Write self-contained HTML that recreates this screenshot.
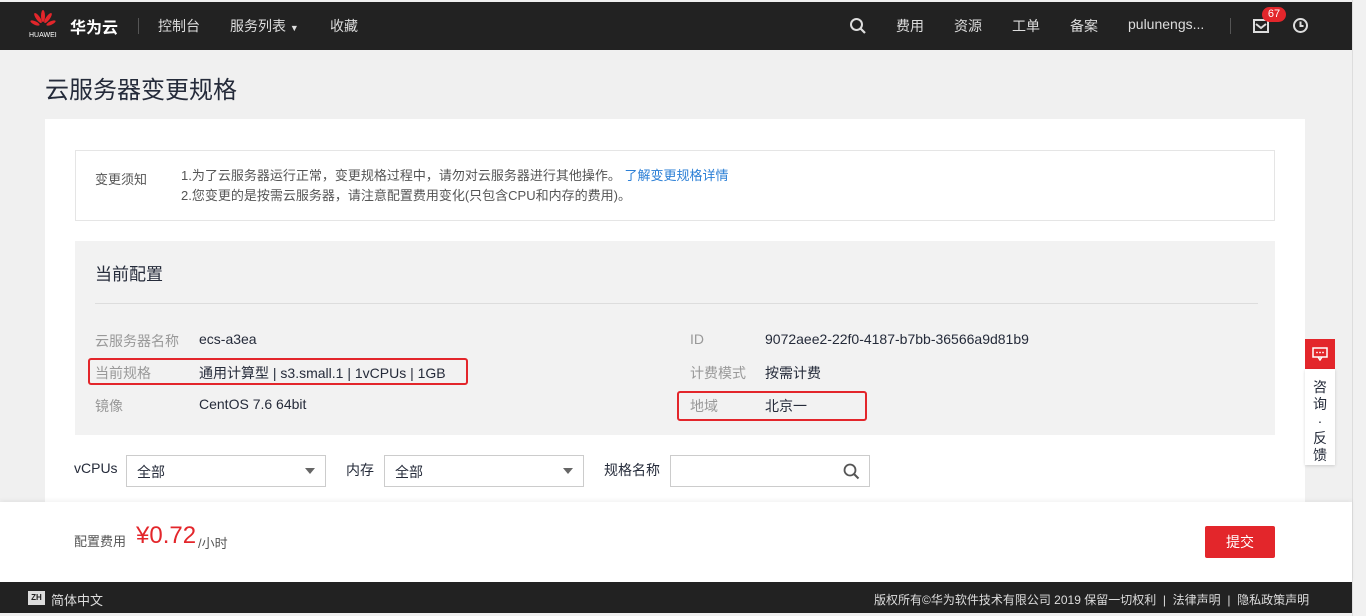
<!DOCTYPE html>
<html><head><meta charset="utf-8"><style>
*{margin:0;padding:0;box-sizing:border-box}
body{width:1366px;height:616px;overflow:hidden;background:#f0f0f0;font-family:"Liberation Sans","Noto Sans CJK SC",sans-serif;font-size:13px;color:#252b3a;position:relative}
.abs{position:absolute}
.top{left:0;top:2px;width:1352px;height:48px;background:#222;color:#ddd;font-size:14px}
.top span{position:absolute;top:14px}
.sb{left:1352px;top:0;width:14px;height:616px;background:#f1f1f1;border-left:1px solid #ddd}
.card{left:45px;top:119px;width:1260px;height:400px;background:#fff}
.lbl{color:#999;font-size:14px}
.val{color:#252b3a;font-size:14px}
.sel{background:#fff;border:1px solid #ccc;height:32px;font-size:14px;padding:6px 10px}
</style></head><body>
<div class="abs top">
 <svg class="abs" style="left:30px;top:8px" width="26" height="18" viewBox="0 0 26 18"><g fill="#e3262b"><ellipse cx="13" cy="6" rx="2" ry="6"/><ellipse cx="8" cy="8" rx="2" ry="6" transform="rotate(-35 8 8)"/><ellipse cx="18" cy="8" rx="2" ry="6" transform="rotate(35 18 8)"/><ellipse cx="5" cy="13" rx="1.8" ry="5" transform="rotate(-65 5 13)"/><ellipse cx="21" cy="13" rx="1.8" ry="5" transform="rotate(65 21 13)"/></g></svg>
 <div class="abs" style="left:29px;top:30px;font-size:7px;color:#fff">HUAWEI</div>
 <span style="left:70px;top:12px;color:#fff;font-size:16px;font-weight:bold">华为云</span>
 <div class="abs" style="left:138px;top:16px;width:1px;height:16px;background:#555"></div>
 <span style="left:158px">控制台</span>
 <span style="left:230px">服务列表 <span style="position:static;font-size:9px">▼</span></span>
 <span style="left:330px">收藏</span>
 <svg class="abs" style="left:849px;top:15px" width="18" height="18" viewBox="0 0 18 18"><circle cx="7.5" cy="7.5" r="5.5" fill="none" stroke="#ddd" stroke-width="2"/><path d="M11.5 11.5L16 16" stroke="#ddd" stroke-width="2.2"/></svg>
 <span style="left:896px">费用</span><span style="left:954px">资源</span><span style="left:1012px">工单</span><span style="left:1070px">备案</span>
 <span style="left:1128px">pulunengs...</span>
 <div class="abs" style="left:1230px;top:16px;width:1px;height:16px;background:#555"></div>
 <svg class="abs" style="left:1253px;top:17px" width="16" height="14" viewBox="0 0 16 14"><rect x="1" y="1" width="14" height="12" fill="none" stroke="#ddd" stroke-width="2"/><path d="M3 5l5 4 5-4" fill="none" stroke="#ddd" stroke-width="2"/></svg>
 <div class="abs" style="left:1262px;top:5px;width:24px;height:15px;background:#e3262b;border-radius:8px;color:#fff;font-size:11px;text-align:center;line-height:15px">67</div>
 <svg class="abs" style="left:1292px;top:15px" width="17" height="17" viewBox="0 0 17 17"><circle cx="8.5" cy="8.5" r="6.5" fill="none" stroke="#ddd" stroke-width="2"/><path d="M8.5 4.5v4.5h3" fill="none" stroke="#ddd" stroke-width="2"/></svg>
</div>
<div class="abs sb"></div>
<div class="abs" style="left:45px;top:70px;font-size:24px;color:#252b3a">云服务器变更规格</div>
<div class="abs card"></div>
<div class="abs" style="left:75px;top:150px;width:1200px;height:71px;border:1px solid #e5e5e5;background:#fff"></div>
<div class="abs" style="left:95px;top:169px;font-size:13px;color:#555">变更须知</div>
<div class="abs" style="left:181px;top:166px;font-size:13px;color:#555;line-height:20px">1.为了云服务器运行正常，变更规格过程中，请勿对云服务器进行其他操作。 <span style="color:#2b7fd6">了解变更规格详情</span><br>2.您变更的是按需云服务器，请注意配置费用变化(只包含CPU和内存的费用)。</div>
<div class="abs" style="left:75px;top:241px;width:1200px;height:194px;background:#f2f2f2"></div>
<div class="abs" style="left:95px;top:260px;font-size:17px">当前配置</div>
<div class="abs" style="left:95px;top:303px;width:1163px;height:1px;background:#ddd"></div>
<div class="abs lbl" style="left:95px;top:331px">云服务器名称</div><div class="abs val" style="left:199px;top:331px">ecs-a3ea</div>
<div class="abs lbl" style="left:95px;top:363px">当前规格</div><div class="abs val" style="left:199px;top:363px">通用计算型 | s3.small.1 | 1vCPUs | 1GB</div>
<div class="abs lbl" style="left:95px;top:396px">镜像</div><div class="abs val" style="left:199px;top:396px">CentOS 7.6 64bit</div>
<div class="abs lbl" style="left:690px;top:331px">ID</div><div class="abs val" style="left:765px;top:331px">9072aee2-22f0-4187-b7bb-36566a9d81b9</div>
<div class="abs lbl" style="left:690px;top:363px">计费模式</div><div class="abs val" style="left:765px;top:363px">按需计费</div>
<div class="abs lbl" style="left:690px;top:396px">地域</div><div class="abs val" style="left:765px;top:396px">北京一</div>
<div class="abs" style="left:88px;top:358px;width:380px;height:27px;border:2px solid #e3262b;border-radius:3px"></div>
<div class="abs" style="left:677px;top:391px;width:190px;height:30px;border:2px solid #e3262b;border-radius:3px"></div>
<div class="abs" style="left:74px;top:460px;font-size:14px">vCPUs</div>
<div class="abs sel" style="left:126px;top:455px;width:200px">全部<span style="position:absolute;right:10px;top:12px;border:5px solid transparent;border-top:6px solid #666"></span></div>
<div class="abs" style="left:346px;top:460px;font-size:14px">内存</div>
<div class="abs sel" style="left:384px;top:455px;width:200px">全部<span style="position:absolute;right:10px;top:12px;border:5px solid transparent;border-top:6px solid #666"></span></div>
<div class="abs" style="left:604px;top:460px;font-size:14px">规格名称</div>
<div class="abs sel" style="left:670px;top:455px;width:200px"><svg style="position:absolute;right:9px;top:7px" width="17" height="17" viewBox="0 0 17 17"><circle cx="7" cy="7" r="5.5" fill="none" stroke="#555" stroke-width="1.8"/><path d="M11 11l4.5 4.5" stroke="#555" stroke-width="2"/></svg></div>
<div class="abs" style="left:1305px;top:339px;width:30px;height:30px;background:#e3262b"><svg style="position:absolute;left:7px;top:8px" width="16" height="14" viewBox="0 0 16 14"><rect x="1" y="1" width="14" height="9" fill="none" stroke="#fff" stroke-width="1.5"/><path d="M6 10l2 3 2-3" fill="none" stroke="#fff" stroke-width="1.5"/><circle cx="5" cy="5.5" r=".9" fill="#fff"/><circle cx="8" cy="5.5" r=".9" fill="#fff"/><circle cx="11" cy="5.5" r=".9" fill="#fff"/></svg></div>
<div class="abs" style="left:1305px;top:369px;width:30px;height:96px;background:#fff;box-shadow:0 1px 3px rgba(0,0,0,.15);font-size:14px;text-align:center;line-height:17px;padding-top:10px">咨<br>询<br>·<br>反<br>馈</div>
<div class="abs" style="left:0;top:502px;width:1352px;height:80px;background:#fff;box-shadow:0 -2px 4px rgba(0,0,0,.05)"></div>
<div class="abs" style="left:74px;top:531px;font-size:13px;color:#555">配置费用</div>
<div class="abs" style="left:136px;top:522px;font-size:24px;color:#e3262b">¥0.72</div>
<div class="abs" style="left:198px;top:533px;font-size:13px;color:#555">/小时</div>
<div class="abs" style="left:1205px;top:526px;width:70px;height:32px;background:#e3262b;color:#fff;font-size:14px;text-align:center;line-height:32px;border-radius:2px">提交</div>
<div class="abs" style="left:0;top:582px;width:1352px;height:31px;background:#222;color:#ddd;font-size:13px">
 <div class="abs" style="left:28px;top:9px;width:17px;height:14px;background:#ddd;color:#222;font-size:8px;font-weight:bold;text-align:center;line-height:14px">ZH</div>
 <div class="abs" style="left:51px;top:8px">简体中文</div>
 <div class="abs" style="left:874px;top:9px;font-size:12px">版权所有©华为软件技术有限公司 2019 保留一切权利 &nbsp;|&nbsp; 法律声明 &nbsp;|&nbsp; 隐私政策声明</div>
</div>
<div class="abs" style="left:0;top:613px;width:1352px;height:3px;background:#f0f0f0"></div>
</body></html>
